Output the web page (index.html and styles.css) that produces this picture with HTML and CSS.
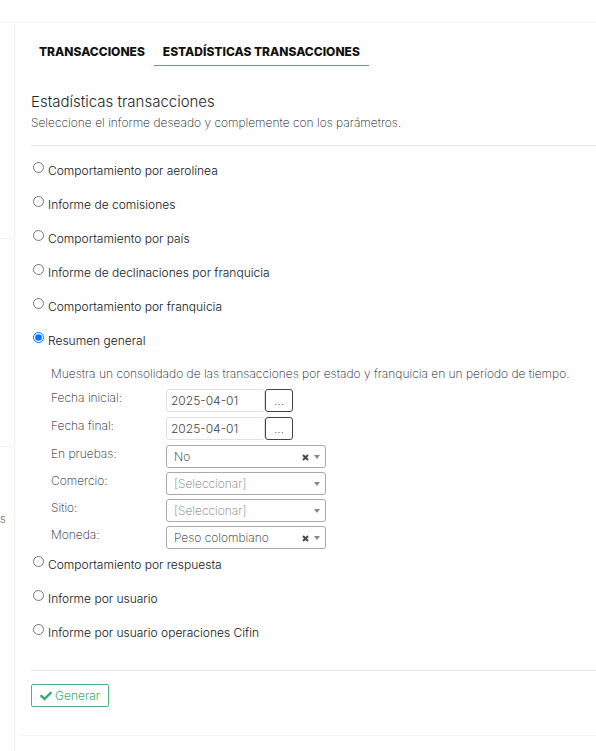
FILE: index.html
```html
<!DOCTYPE html>
<html lang="es">
<head>
<meta charset="utf-8">
<meta name="viewport" content="width=device-width, initial-scale=1">
<title>Estadísticas transacciones</title>
<link rel="stylesheet" href="styles.css">
</head>
<body>
<header class="topbar"></header>
<div class="layout">
  <aside class="sidebar">
    <div class="side-block side-block-first"></div>
    <div class="side-block side-block-second"></div>
    <div class="side-text">s</div>
  </aside>
  <main class="content">
    <nav class="tabs">
      <a class="tab" href="#">TRANSACCIONES</a>
      <a class="tab tab-active" href="#">ESTADÍSTICAS TRANSACCIONES</a>
    </nav>
    <form class="report">
      <h1 class="title">Estadísticas transacciones</h1>
      <p class="subtitle">Seleccione el informe deseado y complemente con los parámetros.</p>
      <div class="options">
        <div class="option"><input type="radio" name="report" id="r1"><label for="r1">Comportamiento por aerolínea</label></div>
        <div class="option"><input type="radio" name="report" id="r2"><label for="r2">Informe de comisiones</label></div>
        <div class="option"><input type="radio" name="report" id="r3"><label for="r3">Comportamiento por país</label></div>
        <div class="option"><input type="radio" name="report" id="r4"><label for="r4">Informe de declinaciones por franquicia</label></div>
        <div class="option"><input type="radio" name="report" id="r5"><label for="r5">Comportamiento por franquicia</label></div>
        <div class="option"><input type="radio" name="report" id="r6" checked><label for="r6">Resumen general</label></div>
        <div class="params">
          <p class="params-text">Muestra un consolidado de las transacciones por estado y franquicia en un período de tiempo.</p>
          <div class="field field-date">
            <label for="start">Fecha inicial:</label>
            <input class="date" type="text" id="start" value="2025-04-01">
            <button class="picker" type="button">...</button>
          </div>
          <div class="field field-date">
            <label for="end">Fecha final:</label>
            <input class="date" type="text" id="end" value="2025-04-01">
            <button class="picker" type="button">...</button>
          </div>
          <div class="field">
            <label for="test">En pruebas:</label>
            <div class="combo">
              <select id="test"><option>No</option></select>
              <button class="clear" type="button"><svg viewBox="0 0 7 7"><path d="M1 1l5 5M6 1l-5 5"/></svg></button>
              <span class="caret"></span>
            </div>
          </div>
          <div class="field">
            <label for="shop">Comercio:</label>
            <div class="combo">
              <select class="empty" id="shop"><option>[Seleccionar]</option></select>
              <span class="caret"></span>
            </div>
          </div>
          <div class="field">
            <label for="site">Sitio:</label>
            <div class="combo">
              <select class="empty" id="site"><option>[Seleccionar]</option></select>
              <span class="caret"></span>
            </div>
          </div>
          <div class="field">
            <label for="currency">Moneda:</label>
            <div class="combo">
              <select id="currency"><option>Peso colombiano</option></select>
              <button class="clear" type="button"><svg viewBox="0 0 7 7"><path d="M1 1l5 5M6 1l-5 5"/></svg></button>
              <span class="caret"></span>
            </div>
          </div>
        </div>
        <div class="option"><input type="radio" name="report" id="r7"><label for="r7">Comportamiento por respuesta</label></div>
        <div class="option"><input type="radio" name="report" id="r8"><label for="r8">Informe por usuario</label></div>
        <div class="option"><input type="radio" name="report" id="r9"><label for="r9">Informe por usuario operaciones Cifin</label></div>
      </div>
      <div class="actions">
        <button class="generate" type="submit"><svg viewBox="0 0 512 512"><path d="M173.900 439.400L7.500 273c-10-10-10-26.200 0-36.200l36.200-36.200c10-10 26.200-10 36.200 0L192 312.700 432.100 72.600c10-10 26.200-10 36.200 0l36.200 36.200c10 10 10 26.200 0 36.200L210.100 439.400c-10 10-26.200 10-36.200 0z"/></svg>Generar</button>
      </div>
    </form>
  </main>
</div>
</body>
</html>
```
FILE: styles.css
```css
* {
  box-sizing: border-box;
}

body {
  margin: 0;
  min-height: 100vh;
  display: flex;
  flex-direction: column;
  background: #fefefe;
  color: #10161c;
  font-family: Inter, "Liberation Sans", sans-serif;
  font-size: 12px;
  font-weight: 200;
  line-height: 18px;
}

.topbar {
  height: 23px;
  border-bottom: 2px solid #f8f8f8;
}

.layout {
  flex: 1;
  display: flex;
}

.sidebar {
  width: 15px;
  flex: none;
  margin-top: 1px;
  border-right: 1px solid #f3f3f3;
}

.side-block {
  border-bottom: 1px solid #f3f3f3;
}

.side-block-first {
  height: 215px;
}

.side-block-second {
  height: 208px;
}

.side-text {
  padding-top: 63px;
  color: #5f7580;
  font-size: 11px;
  font-weight: 300;
}

.content {
  flex: 1;
  min-width: 0;
  padding: 15px 0 16px 5px;
}

.tabs {
  display: flex;
  padding-left: 10px;
}

.tab {
  padding: 5px 9px 4px;
  border-bottom: 1px solid transparent;
  color: #111;
  font-size: 12px;
  font-weight: 800;
  text-decoration: none;
}

.tab-active {
  border-bottom-color: #49ae7b;
}

.report {
  padding: 26px 0 28px 11px;
  border-bottom: 1px solid #f5f5f5;
}

.title {
  margin: 0;
  color: #24292e;
  font-size: 15px;
  font-weight: 300;
  line-height: 20px;
}

.subtitle {
  margin: 2px 0 13px;
}

.options {
  padding: 10px 0 18px;
  border: solid #e8e8e8;
  border-width: 1px 0;
}

.option {
  display: flex;
  height: 34px;
  padding: 6px 0 0 2px;
  color: #111519;
  font-weight: 300;
}

.option input {
  width: 11px;
  height: 11px;
  margin: 0 4px 0 0;
}

.params {
  padding: 5px 0 1px 20px;
}

.params-text {
  margin: 0 0 6px;
}

.field {
  display: flex;
  height: 27px;
}

.field:last-child {
  height: 23px;
}

.field-date {
  height: 28px;
}

.field > label {
  width: 115px;
}

.date,
.picker,
.combo select {
  height: 23px;
  border: 1px solid #dee2e6;
  border-radius: 3px;
  background: #fff;
  color: #10161c;
  font: inherit;
}

.date {
  width: 99px;
  padding: 0 4px;
  color: #3c434a;
  font-weight: 300;
}

.picker {
  width: 28px;
  padding: 0;
  border-color: #3f4254;
}

.combo {
  position: relative;
  width: 160px;
}

.combo select {
  display: block;
  width: 100%;
  padding: 0 7px;
  border-color: #aaa;
  appearance: none;
}

.combo .empty {
  color: #777;
}

.clear {
  position: absolute;
  top: 9px;
  right: 17px;
  width: 7px;
  height: 7px;
  padding: 0;
  border: 0;
  background: none;
}

.clear svg {
  display: block;
  stroke: #3f4a56;
  stroke-width: 2;
}

.caret {
  position: absolute;
  top: 10px;
  right: 6px;
  border: solid transparent;
  border-width: 4px 3px 0;
  border-top-color: #888;
}

.actions {
  padding-top: 13px;
}

.generate {
  display: flex;
  align-items: center;
  gap: 3px;
  height: 23px;
  padding: 0 8px;
  border: 1px solid #49b47d;
  border-radius: 2px;
  background: #fff;
  color: #35ae70;
  font: inherit;
  font-weight: 300;
}

.generate svg {
  width: 12px;
  height: 12px;
  fill: #35ae70;
}
```
